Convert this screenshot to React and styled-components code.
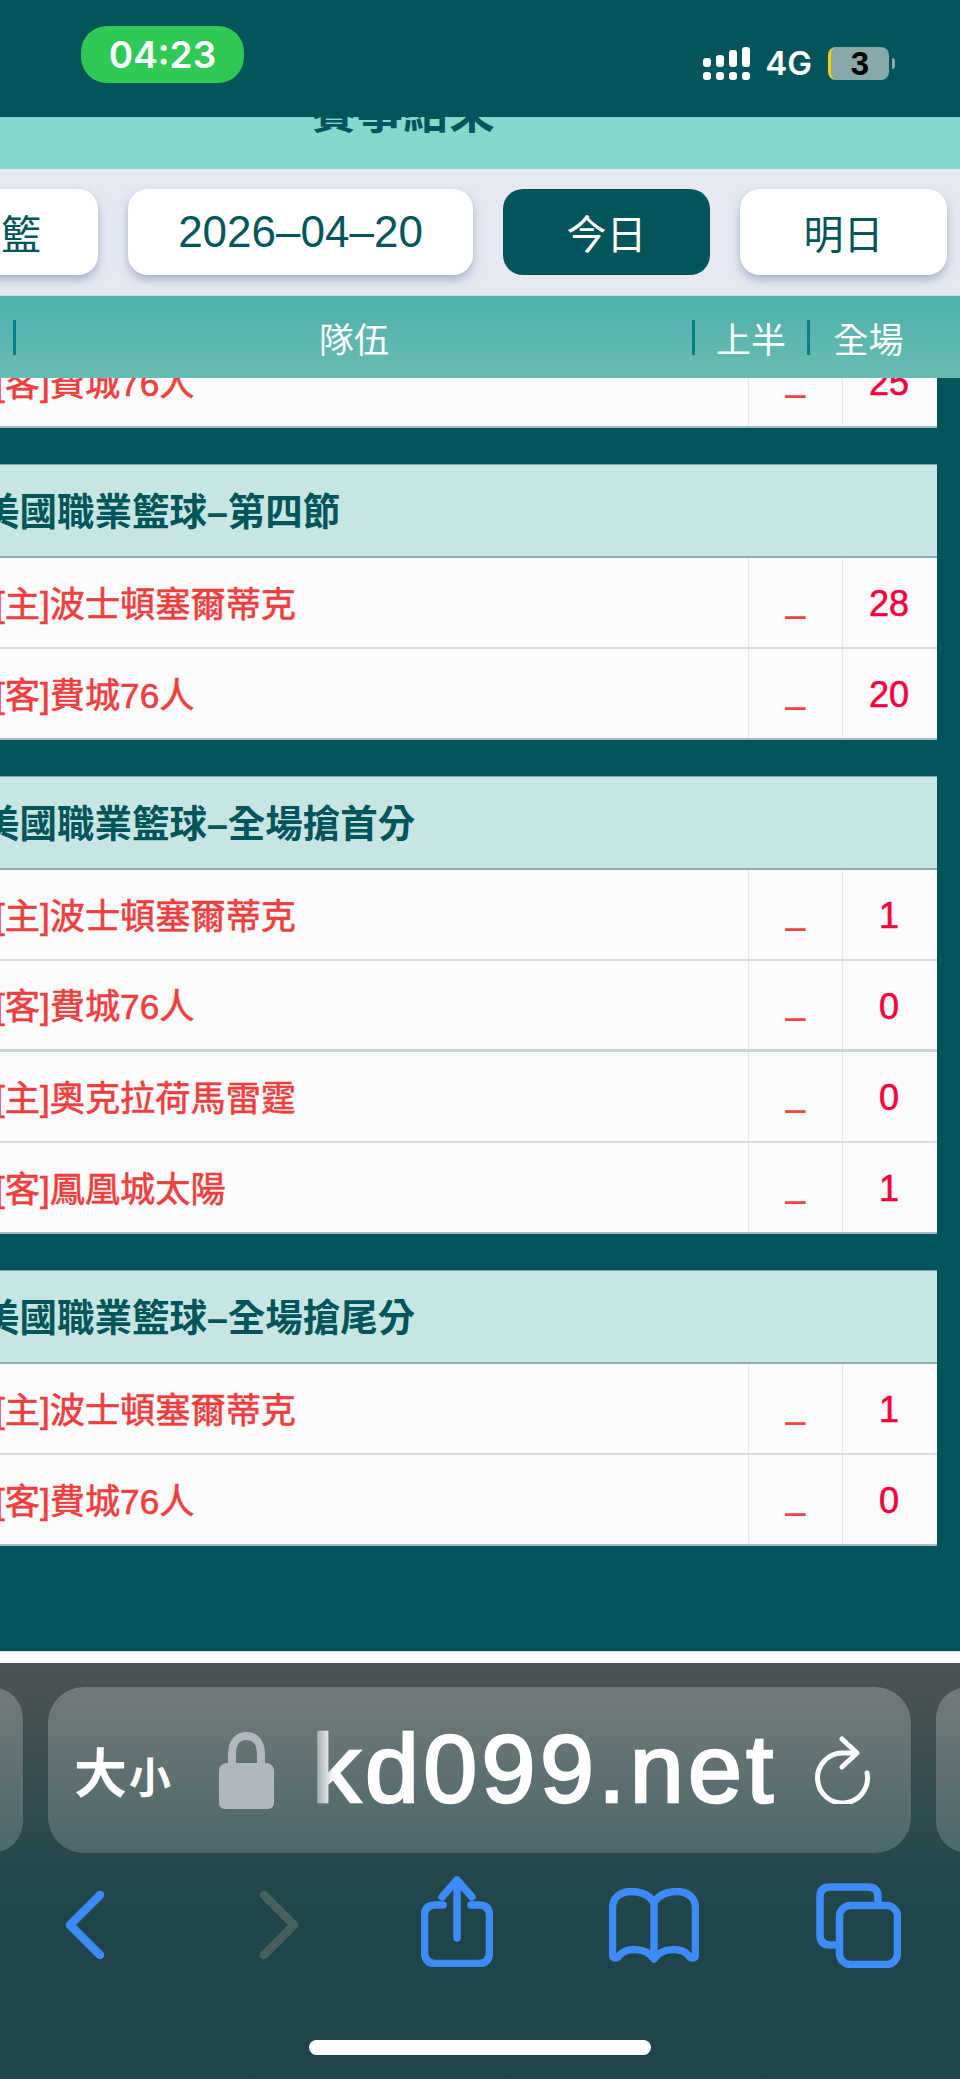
import React from "react";
import styled, { createGlobalStyle } from "styled-components";

const FONT = `"Liberation Sans", "Noto Sans CJK TC", sans-serif`;
const TEAL = "#02555b";

const groups = [
  {
    title: "美國職業籃球–第四節",
    games: [
      [
        { team: "[主]波士頓塞爾蒂克", score: 28 },
        { team: "[客]費城76人", score: 20 },
      ],
    ],
  },
  {
    title: "美國職業籃球–全場搶首分",
    games: [
      [
        { team: "[主]波士頓塞爾蒂克", score: 1 },
        { team: "[客]費城76人", score: 0 },
      ],
      [
        { team: "[主]奧克拉荷馬雷霆", score: 0 },
        { team: "[客]鳳凰城太陽", score: 1 },
      ],
    ],
  },
  {
    title: "美國職業籃球–全場搶尾分",
    games: [
      [
        { team: "[主]波士頓塞爾蒂克", score: 1 },
        { team: "[客]費城76人", score: 0 },
      ],
    ],
  },
];

const signalBars = [9, 12, 17, 20];

const ScoreRow = ({ team, score, $strong }) => (
  <Row $strong={$strong}>
    <TeamCell>{team}</TeamCell>
    <HalfCell>_</HalfCell>
    <ScoreCell>{score}</ScoreCell>
  </Row>
);

const Signal = () => (
  <SignalWrap>
    {signalBars.map((h) => (
      <SignalColumn key={h}>
        <SignalBar style={{ height: h }} />
        <SignalBar style={{ height: 8 }} />
      </SignalColumn>
    ))}
  </SignalWrap>
);

const BlueIcon = styled.svg`
  fill: none;
  stroke: ${(p) => p.$color || "#3e8bf8"};
  stroke-width: ${(p) => p.$stroke || 7.5};
  stroke-linecap: round;
  stroke-linejoin: round;
  display: block;
  margin-top: ${(p) => p.$top || 0}px;
`;

const App = () => (
  <>
    <GlobalStyle />
    <Page>
      <StatusBar>
        <TimePill>04:23</TimePill>
        <StatusRight>
          <Signal />
          <Network>4G</Network>
          <Battery>3</Battery>
          <BatteryNub />
        </StatusRight>
      </StatusBar>

      <TitleBar>
        <Title>賽事結束</Title>
      </TitleBar>

      <Controls>
        <DayButton $first>籃</DayButton>
        <DayButton $wide>2026–04–20</DayButton>
        <DayButton $active>今日</DayButton>
        <DayButton>明日</DayButton>
      </Controls>

      <TableHead>
        <Divider />
        <HeadCell $w={676}>隊伍</HeadCell>
        <Divider />
        <HeadCell $w={112}>上半</HeadCell>
        <Divider />
        <HeadCell $w={117}>全場</HeadCell>
      </TableHead>

      <Scroller>
        <ClippedRow>
          <ScoreRow team="[客]費城76人" score={25} />
        </ClippedRow>
        {groups.map((group) => (
          <Group key={group.title}>
            <GroupTitle>{group.title}</GroupTitle>
            {group.games.map((game, i) =>
              game.map((row, j) => (
                <ScoreRow
                  key={row.team}
                  team={row.team}
                  score={row.score}
                  $strong={j === game.length - 1 && i < group.games.length - 1}
                />
              ))
            )}
          </Group>
        ))}
      </Scroller>
      <WhiteStripe />

      <Browser>
        <UrlRow>
          <SidePill />
          <UrlPill>
            <SizeLabel>
              大<small>小</small>
            </SizeLabel>
            <svg width="55" height="77" viewBox="0 0 55 77">
              <path
                d="M13 34V22C13 10 19 4 27.5 4C36 4 42 10 42 22V34"
                fill="none"
                stroke="#b0b7be"
                strokeWidth="8"
              />
              <path
                d="M8 31H47C51 31 55 34 55 39V70C55 74 53 77 49 77H6C2 77 0 74 0 70V39C0 34 4 31 8 31Z"
                fill="#b0b7be"
              />
            </svg>
            <UrlText>kd099.net</UrlText>
            <svg width="57" height="68" viewBox="0 0 57 68" fill="none" stroke="#fff" strokeWidth="5" strokeLinecap="round" strokeLinejoin="round">
              <path d="M40 17H28.5A25 25 0 1 0 53 37" />
              <path d="M28 3L43 17L28 31" />
            </svg>
          </UrlPill>
          <SidePill />
        </UrlRow>

        <Toolbar>
          <BlueIcon width="40" height="70" viewBox="0 0 40 70" $top={14} $stroke={8.5}>
            <path d="M35 5L5 35L35 65" />
          </BlueIcon>
          <BlueIcon width="42" height="70" viewBox="0 0 42 70" $top={14} $stroke={8.5} $color="#45605f">
            <path d="M7 5L37 35L7 65" />
          </BlueIcon>
          <BlueIcon width="72" height="91" viewBox="0 0 72 91">
            <path d="M22 29H14Q3.500 29 3.500 40V76Q3.500 87.500 14 87.500H58Q68.500 87.500 68.500 76V40Q68.500 29 58 29H50" />
            <path d="M36 6V62" />
            <path d="M21 21L36 4L51 21" />
          </BlueIcon>
          <BlueIcon width="90" height="75" viewBox="0 0 90 75" $top={12}>
            <path d="M45 14C40 7 32 3.500 22 3.500C11 3.500 3.500 10 3.500 20V66C3.500 71 8 71 10 68C16 60 36 58 45 71C54 58 74 60 80 68C82 71 86.500 71 86.500 66V20C86.500 10 79 3.500 68 3.500C58 3.500 50 7 45 14Z" />
            <path d="M45 14V70" />
          </BlueIcon>
          <BlueIcon width="85" height="85" viewBox="0 0 85 85" $top={7}>
            <path d="M20 62H14Q4 62 4 52V14Q4 4 14 4H52Q62 4 62 14V20" />
            <rect x="23.500" y="22.500" width="58" height="59" rx="11" />
          </BlueIcon>
        </Toolbar>

        <HomeIndicator />
      </Browser>
    </Page>
  </>
);

export default App;

const GlobalStyle = createGlobalStyle`
  html, body {
    margin: 0;
    padding: 0;
    background: ${TEAL};
  }
  * {
    box-sizing: border-box;
  }
`;

const Page = styled.div`
  width: 960px;
  height: 2079px;
  overflow: hidden;
  display: flex;
  flex-direction: column;
  background: ${TEAL};
  font-family: ${FONT};
`;

const StatusBar = styled.div`
  height: 117px;
  flex: none;
  display: flex;
  justify-content: space-between;
  padding: 26px 65px 0 81px;
`;

const TimePill = styled.div`
  width: 163px;
  height: 57px;
  border-radius: 26px;
  background: #30c956;
  color: #fff;
  display: flex;
  align-items: center;
  justify-content: center;
  font-family: Inter, sans-serif;
  font-weight: 600;
  font-size: 37px;
`;

const StatusRight = styled.div`
  display: flex;
  align-items: center;
  height: 33px;
  margin-top: 21px;
`;

const SignalWrap = styled.div`
  display: flex;
  gap: 5px;
  align-items: flex-end;
`;

const SignalColumn = styled.div`
  display: flex;
  flex-direction: column;
  gap: 5px;
  width: 8px;
`;

const SignalBar = styled.div`
  background: #fff;
  border-radius: 3px;
`;

const Network = styled.div`
  margin-left: 15px;
  color: #fff;
  font-family: Inter, sans-serif;
  font-weight: 600;
  font-size: 33px;
  line-height: 33px;
`;

const Battery = styled.div`
  margin-left: 16px;
  width: 61px;
  height: 33px;
  border-radius: 8px;
  border-left: 3px solid #f2d00f;
  background: #88a9a9;
  color: #000;
  display: flex;
  align-items: center;
  justify-content: center;
  font-weight: 700;
  font-size: 33px;
`;

const BatteryNub = styled.div`
  margin-left: 3px;
  width: 3px;
  height: 11px;
  background: #88a9a9;
  border-radius: 0 4px 4px 0;
`;

const TitleBar = styled.div`
  height: 52px;
  flex: none;
  overflow: hidden;
  background: #84d9ce;
  padding-left: 311px;
`;

const Title = styled.div`
  margin-top: -28px;
  font-size: 46px;
  line-height: 46px;
  font-weight: 700;
  color: ${TEAL};
`;

const Controls = styled.div`
  height: 127px;
  flex: none;
  display: flex;
  align-items: flex-start;
  gap: 30px;
  padding-top: 20px;
  background: #e6e9f2;
  border-bottom: 1px solid #d4d8e0;
`;

const DayButton = styled.div`
  flex: none;
  width: ${(p) => (p.$wide ? "345px" : "207px")};
  height: 86px;
  border-radius: 20px;
  background: ${(p) => (p.$active ? TEAL : "#fff")};
  color: ${(p) => (p.$active ? "#fff" : TEAL)};
  box-shadow: ${(p) => (p.$active ? "none" : "0 5px 10px rgba(90, 110, 150, 0.45)")};
  display: flex;
  align-items: center;
  justify-content: ${(p) => (p.$first ? "flex-start" : "center")};
  font-size: ${(p) => (p.$wide ? "44px" : "40px")};
  ${(p) => p.$first && "margin-left: -109px; padding-left: 110px;"}
`;

const TableHead = styled.div`
  height: 82px;
  flex: none;
  display: flex;
  align-items: center;
  padding-left: 13px;
  background: linear-gradient(180deg, #4fb0ab, #68bdb2);
`;

const Divider = styled.div`
  flex: none;
  width: 3px;
  height: 35px;
  background: #0a7f86;
`;

const HeadCell = styled.div`
  flex: none;
  width: ${(p) => p.$w}px;
  text-align: center;
  color: #fff;
  font-size: 35px;
`;

const Scroller = styled.div`
  flex: 1;
  min-height: 0;
  overflow: hidden;
  padding-right: 23px;
  display: flex;
  flex-direction: column;
  gap: 36px;
`;

const ClippedRow = styled.div`
  margin-top: -41px;
`;

const Group = styled.div`
  display: flex;
  flex-direction: column;
`;

const GroupTitle = styled.div`
  height: 94px;
  flex: none;
  display: flex;
  align-items: center;
  margin-left: -18px;
  padding-bottom: 5px;
  font-size: 37.5px;
  font-weight: 700;
  color: ${TEAL};
  background: #c7e5e3;
  box-shadow: inset 0 -2px 0 #8ab0b4, inset 0 1px 0 #7fa9ab;
`;

const Row = styled.div`
  height: 91px;
  flex: none;
  display: flex;
  background: #fbfbfb;
  border-bottom: ${(p) => (p.$strong ? "3px solid #c5d5dd" : "2px solid #d9dde2")};
  &:last-child {
    border-bottom: 2px solid #a9bcc0;
  }
`;

const TeamCell = styled.div`
  flex: 1;
  margin-left: -5px;
  padding-bottom: 3px;
  display: flex;
  align-items: center;
  font-size: 35.2px;
  color: #ef3e3e;
  -webkit-text-stroke: 0.6px #ef3e3e;
`;

const HalfCell = styled.div`
  flex: none;
  width: 94px;
  border-left: 1px solid #e0e9e9;
  display: flex;
  align-items: center;
  justify-content: center;
  font-size: 33px;
  font-weight: 700;
  color: #ef4444;
  -webkit-text-stroke: 1.5px #ef4444;
`;

const ScoreCell = styled.div`
  flex: none;
  width: 95px;
  padding: 3px 2px 0 0;
  border-left: 1px solid #e0e9e9;
  display: flex;
  align-items: center;
  justify-content: center;
  font-size: 36px;
  color: #f5003e;
  -webkit-text-stroke: 0.6px #f5003e;
`;

const WhiteStripe = styled.div`
  height: 12px;
  flex: none;
  background: #fbfbfb;
  border-top: 1px solid #c7e5e3;
`;

const Browser = styled.div`
  height: 416px;
  flex: none;
  background: linear-gradient(180deg, #4f5354 0%, #2c4a4e 40%, #1f454a 60%, #1c4449 100%);
  overflow: hidden;
  display: flex;
  flex-direction: column;
`;

const UrlRow = styled.div`
  display: flex;
  gap: 25px;
  margin: 24px 0 0 -40px;
`;

const SidePill = styled.div`
  flex: none;
  width: 63px;
  height: 166px;
  border-radius: 36px;
  background: linear-gradient(180deg, #737979, #4c686b);
`;

const UrlPill = styled.div`
  flex: none;
  width: 863px;
  height: 166px;
  border-radius: 36px;
  background: linear-gradient(180deg, #737979, #4c686b);
  display: flex;
  align-items: center;
  padding-left: 26px;
`;

const SizeLabel = styled.div`
  width: 145px;
  flex: none;
  color: #fff;
  font-weight: 700;
  font-size: 53px;
  small {
    font-size: 42px;
    margin-left: 2px;
  }
`;

const UrlText = styled.div`
  flex: none;
  width: 502px;
  margin-left: 38px;
  padding-bottom: 2px;
  color: #fff;
  font-size: 97px;
  letter-spacing: 4.4px;
  -webkit-text-stroke: 2.6px #fff;
  -webkit-mask-image: linear-gradient(90deg, rgba(0, 0, 0, 0.25) 0, #000 22px);
  mask-image: linear-gradient(90deg, rgba(0, 0, 0, 0.25) 0, #000 22px);
`;

const Toolbar = styled.div`
  display: grid;
  grid-template-columns: 192px 164px 188px 207px auto;
  align-items: start;
  justify-content: start;
  height: 92px;
  margin-top: 23px;
  padding-left: 65px;
`;

const HomeIndicator = styled.div`
  width: 342px;
  height: 15px;
  border-radius: 8px;
  background: #fff;
  align-self: center;
  margin-top: 72px;
`;
